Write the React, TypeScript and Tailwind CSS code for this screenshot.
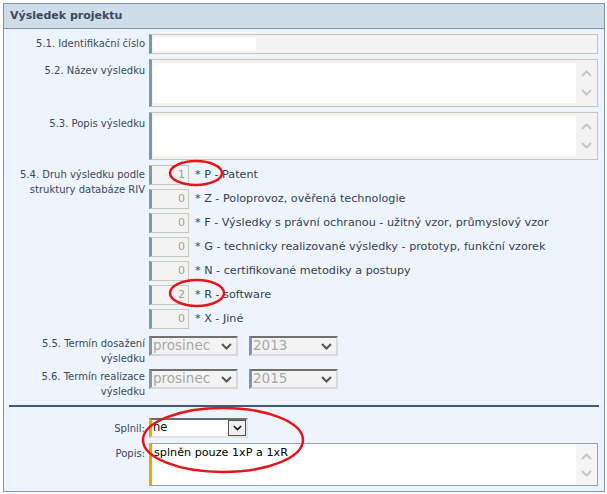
import React from "react";

const FONT = "font-['DejaVu_Sans',Verdana,sans-serif]";

function Chevron({ up, color, w = 11, h = 7, sw = 2 }: { up?: boolean; color: string; w?: number; h?: number; sw?: number }) {
  return (
    <svg width={w} height={h} viewBox="0 0 11 7">
      <path
        d={up ? "M1 6 L5.5 1.5 L10 6" : "M1 1 L5.5 5.5 L10 1"}
        fill="none"
        stroke={color}
        strokeWidth={sw}
      />
    </svg>
  );
}

function Label({ children, className = "" }: { children: React.ReactNode; className?: string }) {
  return (
    <div className={`w-[141px] shrink-0 text-right text-[10px] leading-[15px] text-[#3a4862] ${className}`}>
      {children}
    </div>
  );
}

function Scroller() {
  return (
    <div className="w-[21px] shrink-0 flex flex-col items-center justify-center gap-[12px] bg-[#f3f3f3]">
      <Chevron up color="#c6c6c6" />
      <Chevron color="#c6c6c6" />
    </div>
  );
}

function TextBox() {
  return (
    <div className="flex-1 h-[48px] flex border border-[#ccc8b8] border-l-[3px] border-l-[#7e98b2] bg-[#f3f3f3]">
      <div className="flex-1 my-[3px] ml-[1px] bg-white" />
      <Scroller />
    </div>
  );
}

const options = [
  { n: "1", t: "* P - Patent" },
  { n: "0", t: "* Z - Poloprovoz, ověřená technologie" },
  { n: "0", t: "* F - Výsledky s právní ochranou - užitný vzor, průmyslový vzor" },
  { n: "0", t: "* G - technicky realizované výsledky - prototyp, funkční vzorek" },
  { n: "0", t: "* N - certifikované metodiky a postupy" },
  { n: "2", t: "* R - software" },
  { n: "0", t: "* X - Jiné" },
];

function DisabledSelect({ value }: { value: string }) {
  return (
    <div className="w-[89px] h-[20px] flex items-center justify-between border-l-[3px] border-l-[#7e96ae] border-t-[2px] border-t-[#707070] border-r-[2px] border-r-[#dadada] border-b-[2px] border-b-[#dadada] bg-[#f3f3f3] pl-[1px] pr-[4px]">
      <span className="text-[13.5px] leading-none text-[#a8a8a8]">{value}</span>
      <Chevron color="#555" />
    </div>
  );
}

export default function App() {
  return (
    <div className={`relative w-[607px] h-[494px] bg-white ${FONT}`}>
      <div className="absolute left-[3px] top-[3px] w-[602px] h-[489px] border border-[#7d98b4] bg-[#eef4fb] flex flex-col">
        {/* Header */}
        <div className="h-[25px] shrink-0 bg-[#cfdde9] border-b border-[#7d98b4] flex items-center pl-[6px]">
          <span className="text-[11px] font-bold text-[#3a4a60]">Výsledek projektu</span>
        </div>

        <div className="flex flex-col pr-[6px] pt-[5px]">
          {/* 5.1 */}
          <div className="flex gap-[4px]">
            <Label className="pt-[2px]">5.1. Identifikační číslo</Label>
            <div className="flex-1 h-[20px] border border-[#ccc8b8] border-l-[3px] border-l-[#7e98b2] bg-[#f3f3f3] pt-[2px] pl-[1px]">
              <div className="w-[103px] h-[14px] bg-white" />
            </div>
          </div>

          {/* 5.2 */}
          <div className="flex gap-[4px] mt-[5px]">
            <Label className="pt-[4px]">5.2. Název výsledku</Label>
            <TextBox />
          </div>

          {/* 5.3 */}
          <div className="flex gap-[4px] mt-[5px]">
            <Label className="pt-[4px]">5.3. Popis výsledku</Label>
            <TextBox />
          </div>

          {/* 5.4 */}
          <div className="flex gap-[4px] mt-[5px]">
            <Label className="pt-[2px]">
              5.4. Druh výsledku podle
              <br />
              struktury databáze RIV
            </Label>
            <div className="flex flex-col gap-[4px]">
              {options.map((o, i) => (
                <div key={i} className="flex items-center h-[20px]">
                  <div className="w-[40px] h-[20px] border border-[#ccc8b8] border-l-[3px] border-l-[#7e98b2] bg-[#f3f3f3] flex items-center justify-end pr-[3px] text-[11px] text-[#a0a0a0]">
                    {o.n}
                  </div>
                  <span className="ml-[6px] text-[11.2px] text-[#343f58] whitespace-nowrap">{o.t}</span>
                </div>
              ))}
            </div>
          </div>

          {/* 5.5 */}
          <div className="flex gap-[4px] mt-[7px]">
            <Label>
              5.5. Termín dosažení
              <br />
              výsledku
            </Label>
            <div className="flex gap-[11px]">
              <DisabledSelect value="prosinec" />
              <DisabledSelect value="2013" />
            </div>
          </div>

          {/* 5.6 */}
          <div className="flex gap-[4px] mt-[3px]">
            <Label>
              5.6. Termín realizace
              <br />
              výsledku
            </Label>
            <div className="flex gap-[11px]">
              <DisabledSelect value="prosinec" />
              <DisabledSelect value="2015" />
            </div>
          </div>
        </div>

        {/* Separator */}
        <div className="mx-[5px] mt-[6px] h-[2px] bg-[#405a78] shrink-0" />

        <div className="flex flex-col pr-[6px] mt-[11px]">
          {/* Splnil */}
          <div className="flex gap-[4px] items-center">
            <Label>Splnil:</Label>
            <div className="w-[99px] h-[20px] flex items-center justify-between border-l-[3px] border-l-[#f5a100] border-t-[2px] border-t-[#6b6b6b] border-r-[2px] border-r-[#e2e2e2] border-b-[2px] border-b-[#e2e2e2] bg-white pl-[1px]">
              <span className="text-[11.5px] text-black leading-none">ne</span>
              <div className="w-[18px] h-[16px] border border-[#555] bg-[#f0f0f0] flex items-center justify-center">
                <Chevron color="#111" w={9} h={6} sw={2} />
              </div>
            </div>
          </div>

          {/* Popis */}
          <div className="flex gap-[4px] mt-[5px]">
            <Label className="pt-[3px]">Popis:</Label>
            <div className="flex-1 h-[43px] flex border border-[#8ba2bb] border-l-[3px] border-l-[#f5a100] bg-white">
              <div className="flex-1 pl-[2px] pt-[2px] text-[11.2px] text-black leading-[14px]">splněn pouze 1xP a 1xR</div>
              <div className="w-[21px] shrink-0 flex flex-col items-center justify-center gap-[10px] bg-[#f5f5f5]">
                <Chevron up color="#c6c6c6" />
                <Chevron color="#c6c6c6" />
              </div>
            </div>
          </div>
        </div>
      </div>

      {/* Red annotation circles */}
      <svg className="absolute left-0 top-0 pointer-events-none" width={607} height={494}>
        <ellipse cx={196} cy={173} rx={26} ry={12} fill="none" stroke="#e2161c" strokeWidth={2.5} />
        <ellipse cx={197} cy={293} rx={27} ry={13} fill="none" stroke="#e2161c" strokeWidth={2.5} />
        <ellipse cx={223} cy={440} rx={80} ry={32} fill="none" stroke="#e2161c" strokeWidth={2.5} />
      </svg>
    </div>
  );
}
